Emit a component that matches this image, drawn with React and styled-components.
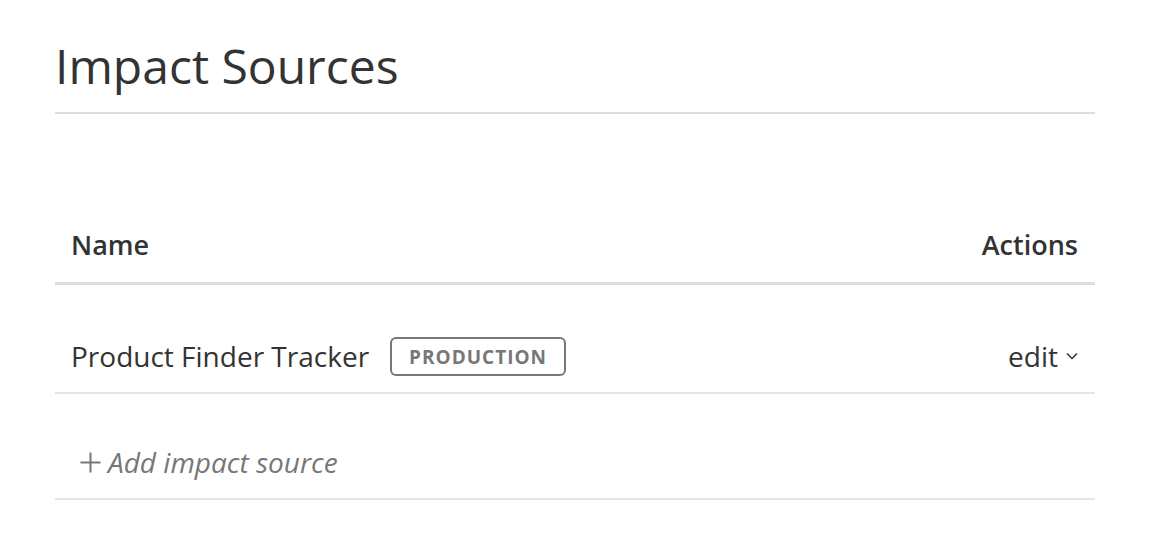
import React from 'react';
import styled, { createGlobalStyle } from 'styled-components';

const GlobalStyle = createGlobalStyle`
  html, body {
    margin: 0;
    padding: 0;
    background: #fff;
  }
  body {
    font-family: "Open Sans", "Noto Sans", sans-serif;
    color: #333;
  }
`;

const Page = styled.main`
  width: 1040px;
  padding: 33px 0 0 55px;
`;

const Title = styled.h1`
  margin: 0;
  padding-bottom: 13px;
  font-size: 48px;
  font-weight: 400;
  line-height: 66px;
  color: #333;
  border-bottom: 2px solid #ddd;
`;

const Table = styled.div`
  margin-top: 98px;
`;

const Row = styled.div`
  display: flex;
  align-items: center;
  justify-content: space-between;
  padding: 51px 17px 16px 16px;
  border-bottom: 2px solid #e5e5e5;
`;

const HeaderRow = styled(Row)`
  padding: 15px 17px 19px 16px;
  border-bottom: 3px solid #ddd;
`;

const AddRow = styled(Row)`
  padding: 48px 17px 16px 16px;
`;

const HeadCell = styled.div`
  font-size: 27px;
  font-weight: 600;
  line-height: 36px;
  color: #333;
`;

const NameCell = styled.div`
  display: flex;
  align-items: center;
  gap: 21px;
  font-size: 28px;
  line-height: 40px;
`;

const Badge = styled.span`
  display: inline-flex;
  align-items: center;
  box-sizing: border-box;
  height: 39px;
  padding: 1px 17px 0;
  border: 2px solid #777;
  border-radius: 6px;
  font-size: 19px;
  font-weight: 700;
  letter-spacing: 1px;
  color: #777;
`;

const EditButton = styled.button`
  display: flex;
  align-items: center;
  gap: 8px;
  padding: 0;
  border: 0;
  background: none;
  font-family: inherit;
  font-size: 28px;
  line-height: 40px;
  color: #333;
  cursor: pointer;
`;

const AddLink = styled.a`
  display: flex;
  align-items: center;
  gap: 7px;
  padding-left: 9px;
  font-size: 28px;
  font-style: italic;
  line-height: 40px;
  color: #777;
  text-decoration: none;
  cursor: pointer;
`;

function Chevron() {
  return (
    <svg width="12" height="8" viewBox="0 0 12 8" fill="none">
      <path d="M1 1.5L6 6.5L11 1.5" stroke="#333" strokeWidth="1.5" />
    </svg>
  );
}

function Plus() {
  return (
    <svg width="21" height="21" viewBox="0 0 21 21" fill="none">
      <path d="M10.5 0.5V20.5M0.5 10.5H20.5" stroke="#777" strokeWidth="2" />
    </svg>
  );
}

export default function App() {
  return (
    <>
      <GlobalStyle />
      <Page>
        <Title>Impact Sources</Title>
        <Table>
          <HeaderRow>
            <HeadCell>Name</HeadCell>
            <HeadCell>Actions</HeadCell>
          </HeaderRow>
          <Row>
            <NameCell>
              Product Finder Tracker
              <Badge>PRODUCTION</Badge>
            </NameCell>
            <EditButton>
              edit
              <Chevron />
            </EditButton>
          </Row>
          <AddRow>
            <AddLink>
              <Plus />
              Add impact source
            </AddLink>
          </AddRow>
        </Table>
      </Page>
    </>
  );
}
